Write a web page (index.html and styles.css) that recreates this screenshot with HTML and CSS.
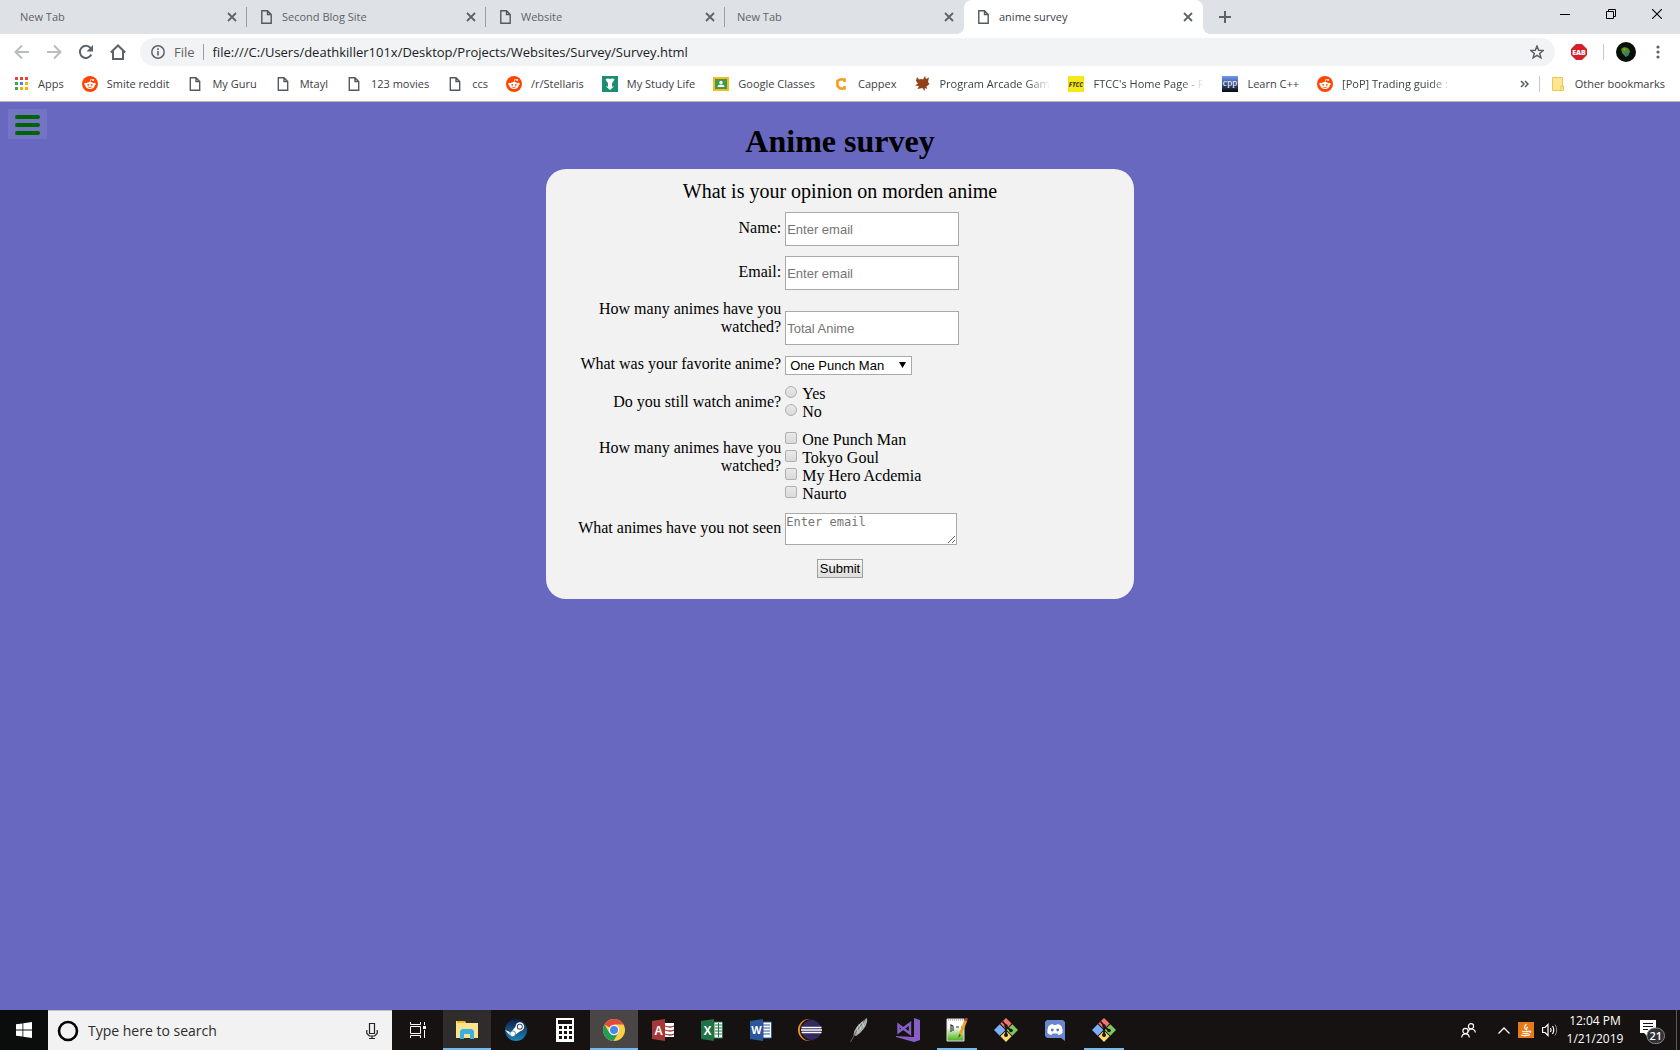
FILE: index.html
```html
<!DOCTYPE html>
<html lang="en">
<head>
<meta charset="utf-8">
<title>anime survey</title>
<link rel="stylesheet" href="styles.css">
</head>
<body>
<svg width="0" height="0" class="defs" aria-hidden="true">
  <symbol id="doc" viewBox="0 0 11 14"><path d="M.8.8h5.700l3.700 3.700v8.700H.8zM6.500.8v3.700h3.700" fill="none" stroke="#55585c" stroke-width="1.400"/></symbol>
  <symbol id="close" viewBox="0 0 10 10"><path d="M1 1l8 8M9 1l-8 8" stroke="#5f6368" stroke-width="1.800"/></symbol>
  <symbol id="reddit" viewBox="0 0 16 16"><circle cx="8" cy="8" r="8" fill="#ff4500"/><ellipse cx="8" cy="9.500" rx="4.700" ry="3.500" fill="#fff"/><circle cx="3.500" cy="8" r="1.200" fill="#fff"/><circle cx="12.500" cy="8" r="1.200" fill="#fff"/><path d="M8 6.500l.7-3 2.300.5" fill="none" stroke="#fff" stroke-width=".8"/><circle cx="11.200" cy="4" r="1" fill="#fff"/><circle cx="6.200" cy="8.800" r=".9" fill="#ff4500"/><circle cx="9.800" cy="8.800" r=".9" fill="#ff4500"/><path d="M6 11q2 1.300 4 0" fill="none" stroke="#ff4500" stroke-width=".7"/></symbol>
  <symbol id="git" viewBox="0 0 24 24"><path d="M12 0l5.600 5.600-5.600 5.600-5.600-5.600z" fill="#f37373"/><path d="M5.700 6.300l5.700 5.700-5.700 5.700L0 12z" fill="#79b0fb"/><path d="M18.300 6.300L24 12l-5.700 5.700-5.700-5.700z" fill="#82c859"/><path d="M12 12.700l5.600 5.600L12 24l-5.600-5.700z" fill="#fcd96f"/><path d="M8.500 3.500L12 7.500v10M12 8.500l5 4" fill="none" stroke="#1c1715" stroke-width="1.800"/><circle cx="12" cy="8" r="1.800" fill="#1c1715"/><circle cx="12" cy="17" r="2" fill="#1c1715"/><circle cx="17" cy="12.500" r="1.800" fill="#1c1715"/></symbol>
</svg>

<header class="browser">
  <div class="tabstrip">
    <div class="tab"><span class="tab-title">New Tab</span><svg class="x"><use href="#close"/></svg></div>
    <div class="tab"><svg class="doc"><use href="#doc"/></svg><span class="tab-title">Second Blog Site</span><svg class="x"><use href="#close"/></svg></div>
    <div class="tab"><svg class="doc"><use href="#doc"/></svg><span class="tab-title">Website</span><svg class="x"><use href="#close"/></svg></div>
    <div class="tab last"><span class="tab-title">New Tab</span><svg class="x"><use href="#close"/></svg></div>
    <div class="tab active"><svg class="doc"><use href="#doc"/></svg><span class="tab-title">anime survey</span><svg class="x"><use href="#close"/></svg></div>
    <button class="plain new-tab" aria-label="New tab"><svg width="12" height="12" viewBox="0 0 12 12"><path d="M6 0v12M0 6h12" stroke="#5f6368" stroke-width="2"/></svg></button>
    <div class="window-buttons">
      <button class="plain" aria-label="Minimize"><svg width="10" height="10" viewBox="0 0 10 10"><path d="M0 5.500h10" stroke="#000"/></svg></button>
      <button class="plain" aria-label="Restore"><svg width="10" height="10" viewBox="0 0 10 10"><path d="M.5 2.500h7v7h-7zM2.500 2.500v-2h7v7h-2" fill="none" stroke="#000"/></svg></button>
      <button class="plain" aria-label="Close"><svg width="10" height="10" viewBox="0 0 10 10"><path d="M0 0l10 10M10 0L0 10" stroke="#000" stroke-width="1.100"/></svg></button>
    </div>
  </div>

  <div class="toolbar">
    <button class="plain" aria-label="Back"><svg width="16" height="16" viewBox="0 0 16 16"><path d="M15 8H2M8 1.500L1.500 8 8 14.500" fill="none" stroke="#babcbe" stroke-width="2"/></svg></button>
    <button class="plain" aria-label="Forward"><svg width="16" height="16" viewBox="0 0 16 16"><path d="M1 8h13M8 1.500L14.500 8 8 14.500" fill="none" stroke="#babcbe" stroke-width="2"/></svg></button>
    <button class="plain" aria-label="Reload"><svg width="16" height="16" viewBox="0 0 16 16"><path d="M13.300 10.500A6 6 0 1 1 12.500 4" fill="none" stroke="#5f6368" stroke-width="2"/><path d="M15 1v6.500H8.500z" fill="#5f6368"/></svg></button>
    <button class="plain" aria-label="Home"><svg width="16" height="16" viewBox="0 0 16 16"><path d="M.8 8.500L8 1.500l7.200 7M3 7v8h10V7" fill="none" stroke="#5f6368" stroke-width="2"/></svg></button>
    <div class="omnibox">
      <svg width="14" height="14" viewBox="0 0 14 14"><circle cx="7" cy="7" r="6.200" fill="none" stroke="#5f6368" stroke-width="1.500"/><path d="M7 6v4.500M7 3.300v1.600" stroke="#5f6368" stroke-width="1.600"/></svg>
      <span class="scheme">File</span>
      <input class="url" aria-label="Address" value="file:///C:/Users/deathkiller101x/Desktop/Projects/Websites/Survey/Survey.html">
      <svg width="14" height="14" viewBox="0 0 14 14"><path d="M7 1l1.700 4.200 4.500.3-3.500 2.900 1.200 4.400L7 10.300l-3.900 2.500 1.200-4.400L.8 5.500l4.500-.3z" fill="none" stroke="#5f6368" stroke-width="1.500"/></svg>
    </div>
    <svg class="eab" width="16" height="16" viewBox="0 0 16 16"><path d="M5 0h6l5 5v6l-5 5H5l-5-5V5z" fill="#d3202b"/><text x="8" y="10.500" text-anchor="middle" font-size="7" font-weight="900" fill="#fff">EAB</text></svg>
    <span class="divider"></span>
    <svg class="avatar" width="20" height="20" viewBox="0 0 20 20"><circle cx="10" cy="10" r="10" fill="#071007"/><path d="M5 7l3-2 4 1 2 3-1 3-3 3-2-2-2-2z" fill="#558b24"/><path d="M9 11l3-1 1 3-3 2z" fill="#267ba4"/><path d="M7 6l3 1-2 2z" fill="#86a93b"/><path d="M12 9l1.500 1-1 1z" fill="#d0632b"/></svg>
    <button class="plain menu" aria-label="Menu"><svg width="4" height="14" viewBox="0 0 4 14"><g fill="#5f6368"><circle cx="2" cy="2" r="1.600"/><circle cx="2" cy="7" r="1.600"/><circle cx="2" cy="12" r="1.600"/></g></svg></button>
  </div>

  <nav class="bookmarks">
    <a href="#"><svg class="fav" viewBox="0 0 16 16"><path d="M2 1h3v3H2zM7 1h3v3H7zM12 1h3v3h-3z" fill="#ea4335"/><path d="M2 6h3v3H2zM2 11h3v3H2z" fill="#34a853"/><path d="M7 6h3v3H7z" fill="#4285f4"/><path d="M12 6h3v3h-3zM7 11h3v3H7zM12 11h3v3h-3z" fill="#fbad05"/></svg><span>Apps</span></a>
    <a href="#"><svg class="fav"><use href="#reddit"/></svg><span>Smite reddit</span></a>
    <a href="#"><svg class="fav page"><use href="#doc"/></svg><span>My Guru</span></a>
    <a href="#"><svg class="fav page"><use href="#doc"/></svg><span>Mtayl</span></a>
    <a href="#"><svg class="fav page"><use href="#doc"/></svg><span>123 movies</span></a>
    <a href="#"><svg class="fav page"><use href="#doc"/></svg><span>ccs</span></a>
    <a href="#"><svg class="fav"><use href="#reddit"/></svg><span>/r/Stellaris</span></a>
    <a href="#"><svg class="fav" viewBox="0 0 16 16"><path d="M0 0h16v16H0z" fill="#1c8d71"/><path d="M3.500 3l2.500-.5 2 .5 2-.5 2.500.5L11 6l-1 1v3.500h2L8 14l-4-3.500h2V7L5 6z" fill="#fff"/></svg><span>My Study Life</span></a>
    <a href="#"><svg class="fav" viewBox="0 0 16 16"><path d="M0 1h16v14H0z" fill="#f6bc18"/><path d="M2 3h12v10H2z" fill="#3f9951"/><circle cx="8" cy="6.500" r="1.700" fill="#fff"/><path d="M4.500 11q0-2.500 3.500-2.500t3.500 2.500z" fill="#fff"/></svg><span>Google Classes</span></a>
    <a href="#"><svg class="fav" viewBox="0 0 16 16"><path d="M11.500 6V3.500H7L4.500 5v5L7 12.500h4.500V10" fill="none" stroke="#f99b1c" stroke-width="2.600"/></svg><span>Cappex</span></a>
    <a href="#"><svg class="fav" viewBox="0 0 16 16"><path d="M3 1l2 2.500 2-.5 2 .5L11 0l1 3 3-1.500-1 4.500 1.500 2-3 2.500.5 2.500-2-1-.5 3-2-3-5 1L5 10 1 9.500l3-2L2 5z" fill="#934016"/></svg><span class="cut">Program Arcade Gam</span></a>
    <a href="#"><svg class="fav" viewBox="0 0 16 16"><path d="M0 0h16v16H0z" fill="#f6e71b"/><text x="8" y="10.500" text-anchor="middle" font-size="6" font-weight="900" font-style="italic" fill="#4b4812">FTCC</text></svg><span class="cut">FTCC's Home Page - F</span></a>
    <a href="#"><svg class="fav" viewBox="0 0 16 16"><defs><linearGradient id="cpp" x2="0" y2="1"><stop stop-color="#709bf5"/><stop offset="1" stop-color="#06080f"/></linearGradient></defs><path d="M0 0h16v16H0z" fill="url(#cpp)"/><text x="8" y="10" text-anchor="middle" font-size="10" font-family="Liberation Serif, serif" fill="#fff">cpp</text></svg><span>Learn C++</span></a>
    <a href="#"><svg class="fav"><use href="#reddit"/></svg><span class="cut">[PoP] Trading guide :</span></a>
    <button class="plain more" aria-label="More bookmarks"><svg width="9" height="8" viewBox="0 0 9 8"><path d="M1 1l3 3-3 3M5 1l3 3-3 3" fill="none" stroke="#55585c" stroke-width="1.500"/></svg></button>
    <span class="divider"></span>
    <a href="#" class="other"><svg class="fav page" viewBox="0 0 12 14"><path d="M.5.500h10v13H.5z" fill="#ffe692" stroke="#ecc94e"/><path d="M9 9h2.500v4.500H9z" fill="#ffe692" stroke="#ecc94e"/></svg><span>Other bookmarks</span></a>
  </nav>
</header>

<main class="site">
  <button class="hamburger" aria-label="Open menu"><i></i><i></i><i></i></button>
  <h1>Anime survey</h1>
  <form class="card">
    <p class="lead">What is your opinion on morden anime</p>
    <div class="row"><label for="name">Name:</label><input id="name" class="field" type="text" placeholder="Enter email"></div>
    <div class="row"><label for="email">Email:</label><input id="email" class="field" type="text" placeholder="Enter email"></div>
    <div class="row tall"><label for="total">How many animes have you watched?</label><input id="total" class="field" type="text" placeholder="Total Anime"></div>
    <div class="row"><label for="fav">What was your favorite anime?</label>
      <span class="select"><select id="fav"><option>One Punch Man</option><option>Tokyo Goul</option><option>My Hero Acdemia</option><option>Naurto</option></select><svg width="7" height="6" viewBox="0 0 7 6"><path d="M0 0h7L3.500 6z"/></svg></span></div>
    <div class="row" role="group" aria-labelledby="still"><span class="label" id="still">Do you still watch anime?</span>
      <div class="choices"><label><input type="radio" name="still">Yes</label><label><input type="radio" name="still">No</label></div></div>
    <div class="row top" role="group" aria-labelledby="seen"><span class="label" id="seen">How many animes have you watched?</span>
      <div class="choices"><label><input type="checkbox">One Punch Man</label><label><input type="checkbox">Tokyo Goul</label><label><input type="checkbox">My Hero Acdemia</label><label><input type="checkbox">Naurto</label></div></div>
    <div class="row"><label for="unseen">What animes have you not seen</label><textarea id="unseen" placeholder="Enter email"></textarea></div>
    <button class="submit" type="submit">Submit</button>
  </form>
</main>

<footer class="taskbar">
  <button class="plain start" aria-label="Start"><svg width="16" height="16" viewBox="0 0 16 16"><path d="M0 2.300L6.500 1.400V7.600H0zM7.300 1.300L16 0v7.600H7.300zM0 8.400h6.500v6.200L0 13.700zM7.300 8.400H16V16l-8.700-1.300z" fill="#fff"/></svg></button>
  <label class="search">
    <svg width="22" height="22" viewBox="0 0 22 22"><circle cx="11" cy="11" r="9" fill="none" stroke="#000" stroke-width="2.600"/></svg>
    <input type="text" aria-label="Search" placeholder="Type here to search">
    <svg width="12" height="16" viewBox="0 0 12 16"><path d="M3.500.5h5v10h-5zM.8 7v3.500l2.500 2.500h5.400l2.500-2.500V7M6 13v2.500M3 15.500h6" fill="none" stroke="#222" stroke-width="1.200"/></svg>
  </label>
  <div class="apps">
    <button class="plain app" aria-label="Task view"><svg width="16" height="16" viewBox="0 0 16 16"><path d="M.5 4.500h10v7H.5zM.5 0v2.500h10V0M.5 16v-2.500h10V16M14.500 0v3M14.500 8v8" fill="none" stroke="#fff"/><path d="M13 4h3v3h-3z" fill="#fff"/></svg></button>
    <button class="plain app open" aria-label="File Explorer"><svg width="22" height="20" viewBox="0 0 22 20"><path d="M0 1h9l1 2h12v15H0z" fill="#fde38c"/><path d="M1 1h8v2H1z" fill="#f0ba22"/><path d="M4 19v-8l2-2h10l2 2v8h-4v-5H8v5z" fill="#39b0e5"/></svg></button>
    <button class="plain app" aria-label="Steam"><svg width="22" height="22" viewBox="0 0 23 23"><defs><linearGradient id="steam" x2="0" y2="1"><stop stop-color="#111b45"/><stop offset="1" stop-color="#1b86bb"/></linearGradient></defs><circle cx="11.500" cy="11.500" r="11.500" fill="url(#steam)"/><path d="M0 11.500l6 2.500 5-6 6 4-7 5H5z" fill="#fff"/><circle cx="15.500" cy="8" r="4.500" fill="#fff"/><circle cx="15.500" cy="8" r="3" fill="#1b2d53"/><circle cx="15.500" cy="8" r="2.200" fill="#fff"/><circle cx="8" cy="15.500" r="3" fill="#fff" stroke="#1c5888" stroke-width=".7"/></svg></button>
    <button class="plain app" aria-label="Calculator"><svg width="18" height="24" viewBox="0 0 18 24"><path d="M0 0h18v24H0z" fill="#fff"/><path d="M2 2h14v4H2zM3 8h3v3H3zM8 8h3v3H8zM13 8h3v3h-3zM3 13h3v3H3zM8 13h3v3H8zM13 13h3v3h-3zM3 18h3v3H3zM8 18h3v3H8zM13 18h3v3h-3z" fill="#151110"/></svg></button>
    <button class="plain app open current" aria-label="Chrome"><svg width="22" height="22" viewBox="0 0 22 22"><circle cx="11" cy="11" r="11" fill="#fdcf45"/><path d="M11 11L1.500 5.500A11 11 0 0 1 20.500 5.500H11z" fill="#e14a3d"/><path d="M1.500 5.500A11 11 0 0 0 10.500 22l5-8.500-4.500-2.500-4.700 2.700z" fill="#239c58"/><circle cx="11" cy="11" r="5.200" fill="#fff"/><circle cx="11" cy="11" r="4" fill="#4a86ec"/></svg></button>
    <button class="plain app" aria-label="Access"><svg width="22" height="22" viewBox="0 0 22 22"><path d="M13 4h9v14h-9z" fill="#fff"/><path d="M13 7q5 2 9 0M13 11q5 2 9 0M13 15q5 2 9 0" fill="none" stroke="#a4373a" stroke-width="1.300"/><path d="M0 2l13-2v22L0 20z" fill="#a4373a"/><text x="6.500" y="15.500" text-anchor="middle" font-size="12" font-weight="700" fill="#fff">A</text></svg></button>
    <button class="plain app" aria-label="Excel"><svg width="22" height="22" viewBox="0 0 22 22"><path d="M13 3h8.500v16H13z" fill="#fff" stroke="#217346"/><path d="M14 6h7M14 9h7M14 12h7M14 15h7M17.500 4v14" stroke="#217346"/><path d="M0 2l13-2v22L0 20z" fill="#217346"/><text x="6.500" y="15.500" text-anchor="middle" font-size="12" font-weight="700" fill="#fff">X</text></svg></button>
    <button class="plain app" aria-label="Word"><svg width="22" height="22" viewBox="0 0 22 22"><path d="M13 3h8.500v16H13z" fill="#fff" stroke="#2b579a"/><path d="M13 6h7M13 9h7M13 12h7M13 15h7" stroke="#2b579a"/><path d="M0 2l13-2v22L0 20z" fill="#2b579a"/><text x="6.500" y="15" text-anchor="middle" font-size="11" font-weight="700" fill="#fff">W</text></svg></button>
    <button class="plain app" aria-label="Eclipse"><svg width="24" height="22" viewBox="0 0 24 22"><circle cx="11" cy="11" r="11" fill="#f7941e"/><circle cx="12.800" cy="11" r="11" fill="#191413"/><circle cx="13.500" cy="11" r="10" fill="#342961"/><path d="M3.500 8.500h20M3 11h21M3.500 13.500h20" stroke="#fff" stroke-width="1.400"/></svg></button>
    <button class="plain app" aria-label="Feather editor"><svg width="18" height="24" viewBox="0 0 18 24"><path d="M3.500 17Q4 8 17 0q1 5-3 10.500T6 18z" fill="#a8acad"/><path d="M.5 24Q6 12 15 2" fill="none" stroke="#62686b"/><path d="M9 6l2 6M12 4l2 5M7 9l1 6" stroke="#e3e5e5" stroke-width=".7"/></svg></button>
    <button class="plain app" aria-label="Visual Studio"><svg width="24" height="24" viewBox="0 0 24 24"><path d="M18 0l6 2v20l-6 2L0 19v-1l18 1z" fill="#865fc5"/><path d="M2.500 7v7L14 5.500v10L2.500 7z" fill="none" stroke="#865fc5" stroke-width="2.400"/></svg></button>
    <button class="plain app open back" aria-label="Notepad++"><svg width="22" height="24" viewBox="0 0 22 24"><defs><linearGradient id="npp" x2="0" y2="1"><stop offset=".35" stop-color="#fff"/><stop offset="1" stop-color="#48ae10"/></linearGradient></defs><path d="M1 1h17v22H1z" fill="url(#npp)" stroke="#ddd"/><path d="M2 2h15" stroke="#8d9290" stroke-dasharray="1 1"/><path d="M5 14V7l2 1v5M10 9h3M15 9h2" fill="none" stroke="#333" stroke-width="1.200"/><path d="M20 2l-6 15" stroke="#e8a626" stroke-width="3"/><path d="M20.500 0L19.500 3" stroke="#b64343" stroke-width="3"/><path d="M13 16l2 1-2.500 3z" fill="#544329"/></svg></button>
    <button class="plain app" aria-label="Git Bash"><svg width="24" height="24"><use href="#git"/></svg></button>
    <button class="plain app" aria-label="Discord"><svg width="20" height="21" viewBox="0 0 20 21"><path d="M2 0h16l2 2v19l-4-3H2l-2-2V2z" fill="#6b86d0"/><path d="M3.500 6Q6 4 8 4l.5 1h3l.5-1q2 0 4.500 2 1.500 4 1 7-2 2-4 2l-1-1.500h-5L6.500 15q-2 0-4-2-.5-3 1-7z" fill="#fff"/><circle cx="7.300" cy="10" r="1.400" fill="#5d76c1"/><circle cx="12.700" cy="10" r="1.400" fill="#5d76c1"/></svg></button>
    <button class="plain app open back" aria-label="Git GUI"><svg width="24" height="24"><use href="#git"/></svg></button>
  </div>
  <div class="tray">
    <svg class="people" width="15" height="15" viewBox="0 0 15 15"><g fill="none" stroke="#fff" stroke-width="1.200"><circle cx="10" cy="3.200" r="2.600"/><path d="M7.500 8.500Q8 6 10 6q4 0 4.300 3.500"/><circle cx="4.500" cy="8" r="2.600"/><path d="M.7 14.500Q1 10.800 4.500 10.800T8.300 14.500"/></g></svg>
    <svg width="12" height="7" viewBox="0 0 12 7"><path d="M.5 6.500L6 1l5.500 5.500" fill="none" stroke="#fff" stroke-width="1.300"/></svg>
    <svg width="16" height="16" viewBox="0 0 16 16"><path d="M0 0h16v16H0z" fill="#e87917"/><path d="M8.500 2Q5 5 8 7.500M10 5Q7.500 6.500 9 8.500M4 9q4 1.500 7.500 0M4.500 11q3 1.300 6 0M3 13q5 1.500 9-.5M11.500 9q2 0 .5 2" fill="none" stroke="#fff" stroke-width="1.200"/></svg>
    <svg width="16" height="14" viewBox="0 0 16 14"><path d="M.6 4.500H3L6 1.500v11L3 9.500H.6zM8.500 5q1.200 2 0 4M10.500 3q2.500 4 0 8" fill="none" stroke="#fff" stroke-width="1.200"/><path d="M13 1.500q3.500 5.500 0 11" fill="none" stroke="#888"/></svg>
    <div class="clock"><span>12:04 PM</span><span>1/21/2019</span></div>
    <svg class="notes" width="25" height="26" viewBox="0 0 25 26"><path d="M0 1h16v13H7v3l-3-3H0z" fill="#fff"/><path d="M3 4.500h10M3 7.500h10M3 10.500h5" stroke="#111"/><rect x="7" y="9" width="17.500" height="15.500" rx="7.700" fill="#303234" stroke="#85888a"/><text x="15.700" y="21" text-anchor="middle" font-size="11" font-weight="600" fill="#fff">21</text></svg>
    <span class="desktop-edge"></span>
  </div>
</footer>
</body>
</html>
```
FILE: styles.css
```css
* { box-sizing: border-box; }

body {
  margin: 0;
  min-height: 100vh;
  display: flex;
  flex-direction: column;
  font-family: "Open Sans", "Noto Sans", sans-serif;
  font-size: 11px;
  color: #3c4043;
}

svg { flex: none; display: block; }
.defs { position: absolute; }

.plain {
  border: 0;
  padding: 0;
  background: none;
  display: flex;
  align-items: center;
  justify-content: center;
}

/* Browser frame */
.browser { background: #fff; border-bottom: 1px solid #b5b4b8; }

.tabstrip {
  height: 34px;
  padding-left: 8px;
  display: flex;
  background: #dee1e6;
}

.tab {
  width: 239px;
  padding: 0 10px 0 12px;
  display: flex;
  align-items: center;
  color: #5f6368;
  background: linear-gradient(#9a9da2, #9a9da2) right center / 1px 20px no-repeat;
}
.tab.last { background: none; }
.tab.active {
  position: relative;
  background: #fff;
  color: #3c4043;
  border-radius: 8px 8px 0 0;
}
.tab.active::before,
.tab.active::after {
  content: "";
  position: absolute;
  bottom: 0;
  width: 8px;
  height: 8px;
}
.tab.active::before { left: -8px; background: radial-gradient(circle at 0 0, #dee1e6 8px, #fff 8px); }
.tab.active::after { right: -8px; background: radial-gradient(circle at 100% 0, #dee1e6 8px, #fff 8px); }
.tab .doc { width: 11px; height: 14px; margin: 0 10px 0 2px; }
.tab .x { width: 10px; height: 10px; }
.tab-title { flex: 1; padding-bottom: 2px; }
.new-tab { width: 44px; }

.window-buttons { margin-left: auto; display: flex; height: 28px; }
.window-buttons button { width: 46px; }

.toolbar {
  display: flex;
  align-items: center;
  height: 36px;
  padding: 0 11px 0 6px;
}
.toolbar > button { width: 32px; height: 32px; }
.omnibox {
  flex: 1;
  display: flex;
  align-items: center;
  height: 28px;
  margin: 0 16px 0 6px;
  padding: 0 11px;
  border-radius: 14px;
  background: #f1f3f4;
}
.scheme {
  margin-left: 9px;
  padding-right: 8px;
  border-right: 1px solid #9a9da2;
  font-size: 13px;
  line-height: 16px;
  color: #5f6368;
}
.url {
  flex: 1;
  border: 0;
  padding: 0 0 0 9px;
  background: none;
  font: 13px "Open Sans", "Noto Sans", sans-serif;
  color: #202124;
}
.divider { width: 1px; height: 16px; background: #c5c8cb; }
.eab { margin-right: 16px; }
.avatar { margin-left: 12px; }
.toolbar > .menu { width: 22px; margin-left: 11px; }

.bookmarks {
  display: flex;
  align-items: center;
  height: 31px;
  padding: 0 15px 4px 13px;
}
.bookmarks a {
  display: flex;
  gap: 9px;
  margin-right: 18px;
  line-height: 16px;
  white-space: nowrap;
  color: inherit;
  text-decoration: none;
}
.fav { width: 16px; height: 16px; }
.fav.page { height: 14px; margin-top: 1px; }
.cut {
  width: 111px;
  overflow: hidden;
  -webkit-mask-image: linear-gradient(90deg, #000 88px, transparent 111px);
  mask-image: linear-gradient(90deg, #000 88px, transparent 111px);
}
.more { margin-left: auto; margin-right: 10px; }
.bookmarks .other { margin: 0 0 0 10px; }

/* Survey page */
.site {
  flex: 1;
  display: grid;
  grid-template-columns: 1fr minmax(420px, 35%) 1fr;
  grid-template-rows: 67px auto;
  align-content: start;
  background: #6968c0;
  color: #000;
  font-family: "Liberation Serif", serif;
  font-size: 16px;
}
.hamburger {
  justify-self: start;
  align-self: start;
  display: grid;
  gap: 4px;
  margin: 7px 8px;
  padding: 6px 7px 4px;
  border: 0;
  background: #7474c4;
}
.hamburger i { width: 25px; height: 4px; border-radius: 2px; background: #006400; }
h1 {
  margin: 0;
  padding-top: 21px;
  font-size: 32px;
  line-height: 37px;
  text-align: center;
}
.card {
  grid-column: 2;
  display: flex;
  flex-direction: column;
  gap: 10px;
  padding: 11px 0 21px;
  border-radius: 20px;
  background: #f2f2f2;
  line-height: 18px;
}
.lead {
  margin: 0;
  font-size: 20px;
  line-height: 22px;
  text-align: center;
}
.row {
  display: grid;
  grid-template-columns: 40% 1fr;
  align-items: center;
  justify-items: start;
}
.row > label,
.row > .label {
  justify-self: end;
  max-width: 206px;
  padding: 0 0 2px;
  text-align: right;
}
.row > :last-child { margin-left: 4px; }
.row.tall { min-height: 45px; }
.row.tall > label { align-self: start; }
.row.tall > .field { align-self: end; }
.row.top > .label { align-self: start; padding-top: 8px; }

.field,
.select select,
textarea {
  border: 1px solid #a9a9a9;
  border-radius: 0;
  background: #fff;
}
.field {
  width: 174px;
  height: 34px;
  padding: 1px;
  font: 13px "Liberation Sans", sans-serif;
}
::placeholder { color: #757575; opacity: 1; }
.select { display: grid; align-items: center; min-height: 20px; }
.select select,
.select svg { grid-area: 1 / 1; }
.select svg { justify-self: end; margin-right: 6px; pointer-events: none; }
.select select {
  appearance: none;
  width: 127px;
  height: 19px;
  padding: 0 4px;
  font: 13px "Liberation Sans", sans-serif;
  color: #000;
}
.choices { display: grid; }
.choices label { display: flex; gap: 5px; }
.choices input {
  appearance: none;
  width: 12px;
  height: 12px;
  margin: 1px 0 0;
  border: 1px solid #b0b0b0;
  border-radius: 2px;
  background: linear-gradient(#e9e9e9, #dadada);
}
.choices input[type="radio"] { border-radius: 50%; }
textarea {
  width: 172px;
  height: 32px;
  padding: 1px 0;
  font: 12px "DejaVu Sans Mono", monospace;
}
.submit {
  align-self: center;
  height: 19px;
  margin-top: 4px;
  padding: 0 2px;
  border: 1px solid #a0a0a0;
  background: linear-gradient(#f6f6f6, #dddddd);
  font: 13px "Liberation Sans", sans-serif;
  color: #000;
}

/* Windows taskbar */
.taskbar {
  display: flex;
  height: 40px;
  background: #151211;
  color: #fff;
}
.start { width: 48px; background: #0b0d0c; }
.search {
  width: 344px;
  display: flex;
  align-items: center;
  padding: 0 14px 0 9px;
  border-top: 1px solid #c2c2c2;
  background: #f2f2f2;
}
.search input {
  flex: 1;
  border: 0;
  padding: 0 0 0 9px;
  background: none;
  font: 14px "Open Sans", "Noto Sans", sans-serif;
}
.search ::placeholder { color: #2d2d2d; }
.apps { display: flex; gap: 1px; margin-left: 2px; }
.app { width: 48px; }
.app.open {
  background: linear-gradient(#76b9ed, #76b9ed) center bottom / 100% 2px no-repeat #2f2c2c;
}
.app.current { background-color: #4a4646; }
.app.back { background-color: transparent; background-size: 40px 2px; }

.tray {
  margin-left: auto;
  display: flex;
  align-items: center;
  gap: 8px;
}
.tray .people { margin-right: 14px; }
.clock {
  display: grid;
  width: 58px;
  line-height: 18px;
  font-size: 12px;
  text-align: center;
}
.tray .notes { margin: 4px 3px 0 8px; }
.desktop-edge { width: 1px; height: 40px; margin-right: 3px; background: #5c5c5c; }
```
